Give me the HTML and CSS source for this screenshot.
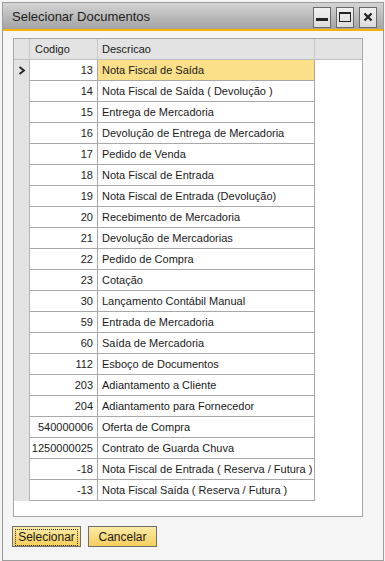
FILE: index.html
```html
<!DOCTYPE html>
<html lang="pt">
<head>
    <meta charset="UTF-8">
    <title>Selecionar Documentos</title>
    <link rel="stylesheet" href="styles.css">
</head>
<body>
    <div class="window">
        <div class="titlebar">
            <span class="title">Selecionar Documentos</span>
            <div class="win-buttons">
                <button class="win-btn"><svg width="12" height="10" viewBox="0 0 12 10"><rect x="0" y="6" width="12" height="3" fill="#222"/></svg></button>
                <button class="win-btn"><svg width="12" height="10" viewBox="0 0 12 10"><rect x="0.5" y="0.5" width="11" height="9" fill="none" stroke="#222"/><rect x="0" y="0" width="12" height="2" fill="#222"/></svg></button>
                <button class="win-btn"><svg width="10" height="10" viewBox="0 0 10 10"><path d="M1.5 1.5 L8.5 8.5 M8.5 1.5 L1.5 8.5" stroke="#222" stroke-width="2.2"/></svg></button>
            </div>
        </div>
        <div class="accent"></div>

        <div class="content">
            <div class="grid">
                <div class="row header">
                    <div class="sel"></div>
                    <div class="cell code">Codigo</div>
                    <div class="cell desc">Descricao</div>
                    <div class="filler"></div>
                </div>
                <div class="row">
                    <div class="sel"><svg width="8" height="9" viewBox="0 0 8 9"><path d="M1.5 1 L6 4.5 L1.5 8" fill="none" stroke="#222" stroke-width="1.8"/></svg></div>
                    <div class="cell num">13</div>
                    <div class="cell desc active">Nota Fiscal de Saída</div>
                    <div class="filler"></div>
                </div>
                <div class="row"><div class="sel"></div><div class="cell num">14</div><div class="cell desc">Nota Fiscal de Saída ( Devolução )</div><div class="filler"></div></div>
                <div class="row"><div class="sel"></div><div class="cell num">15</div><div class="cell desc">Entrega de Mercadoria</div><div class="filler"></div></div>
                <div class="row"><div class="sel"></div><div class="cell num">16</div><div class="cell desc">Devolução de Entrega de Mercadoria</div><div class="filler"></div></div>
                <div class="row"><div class="sel"></div><div class="cell num">17</div><div class="cell desc">Pedido de Venda</div><div class="filler"></div></div>
                <div class="row"><div class="sel"></div><div class="cell num">18</div><div class="cell desc">Nota Fiscal de Entrada</div><div class="filler"></div></div>
                <div class="row"><div class="sel"></div><div class="cell num">19</div><div class="cell desc">Nota Fiscal de Entrada (Devolução)</div><div class="filler"></div></div>
                <div class="row"><div class="sel"></div><div class="cell num">20</div><div class="cell desc">Recebimento de Mercadoria</div><div class="filler"></div></div>
                <div class="row"><div class="sel"></div><div class="cell num">21</div><div class="cell desc">Devolução de Mercadorias</div><div class="filler"></div></div>
                <div class="row"><div class="sel"></div><div class="cell num">22</div><div class="cell desc">Pedido de Compra</div><div class="filler"></div></div>
                <div class="row"><div class="sel"></div><div class="cell num">23</div><div class="cell desc">Cotação</div><div class="filler"></div></div>
                <div class="row"><div class="sel"></div><div class="cell num">30</div><div class="cell desc">Lançamento Contábil Manual</div><div class="filler"></div></div>
                <div class="row"><div class="sel"></div><div class="cell num">59</div><div class="cell desc">Entrada de Mercadoria</div><div class="filler"></div></div>
                <div class="row"><div class="sel"></div><div class="cell num">60</div><div class="cell desc">Saída de Mercadoria</div><div class="filler"></div></div>
                <div class="row"><div class="sel"></div><div class="cell num">112</div><div class="cell desc">Esboço de Documentos</div><div class="filler"></div></div>
                <div class="row"><div class="sel"></div><div class="cell num">203</div><div class="cell desc">Adiantamento a Cliente</div><div class="filler"></div></div>
                <div class="row"><div class="sel"></div><div class="cell num">204</div><div class="cell desc">Adiantamento para Fornecedor</div><div class="filler"></div></div>
                <div class="row"><div class="sel"></div><div class="cell num">540000006</div><div class="cell desc">Oferta de Compra</div><div class="filler"></div></div>
                <div class="row"><div class="sel"></div><div class="cell num">1250000025</div><div class="cell desc">Contrato de Guarda Chuva</div><div class="filler"></div></div>
                <div class="row"><div class="sel"></div><div class="cell num">-18</div><div class="cell desc">Nota Fiscal de Entrada ( Reserva / Futura )</div><div class="filler"></div></div>
                <div class="row"><div class="sel"></div><div class="cell num">-13</div><div class="cell desc">Nota Fiscal Saída ( Reserva / Futura )</div><div class="filler"></div></div>
            </div>

            <div class="actions">
                <button class="btn focused"><span>Selecionar</span></button>
                <button class="btn"><span>Cancelar</span></button>
            </div>
        </div>
    </div>
</body>
</html>
```

FILE: styles.css
```css
body {
    margin: 0;
    padding: 2px 1px 0 2px;
    background: #f4f4f4;
    font-family: 'Liberation Sans', Arial, sans-serif;
    font-size: 11px;
    color: #1a1a1a;
}
.window {
    width: 380px;
    height: 557px;
    border: 1px solid #9c9c9c;
    background: #f5f5f5;
    display: flex;
    flex-direction: column;
}
.titlebar {
    height: 26px;
    background: linear-gradient(#d4d4d4, #a3a3a3);
    display: flex;
    align-items: center;
    justify-content: space-between;
    padding: 0 6px 0 9px;
}
.title {
    font-size: 13px;
    color: #1e1e1e;
}
.win-buttons {
    display: flex;
    gap: 5px;
    margin-top: 2px;
}
.win-btn {
    width: 18px;
    height: 21px;
    padding: 0;
    border: 1px solid #6a6a6a;
    background: linear-gradient(#f0f0f0, #dcdcdc);
    display: flex;
    align-items: center;
    justify-content: center;
}
.accent {
    height: 2px;
    background: #f5b400;
}
.content {
    padding: 7px 0 0 10px;
}
.grid {
    width: 348px;
    height: 477px;
    border: 1px solid #a8a8a8;
    background: #fff;
}
.row {
    display: flex;
    height: 21px;
}
.sel {
    width: 15px;
    background: #e3e3e3;
    border-right: 1px solid #b4b4b4;
    display: flex;
    align-items: center;
    justify-content: center;
}
.cell {
    height: 20px;
    line-height: 20px;
    border-right: 1px solid #a8a8a8;
    border-bottom: 1px solid #a8a8a8;
    white-space: nowrap;
    overflow: hidden;
}
.num {
    width: 63px;
    padding-right: 4px;
    text-align: right;
}
.code {
    width: 62px;
    padding-left: 5px;
}
.desc {
    width: 212px;
    padding-left: 4px;
}
.filler {
    flex: 1;
}
.header .sel,
.header .cell,
.header .filler {
    height: 20px;
    background: #e3e3e3;
    border-right-color: #c9c9c9;
    border-bottom: 1px solid #c0c0c0;
}
.active {
    background: #fcdf89;
}
.actions {
    display: flex;
    gap: 7px;
    margin: 9px 0 0 -1px;
}
.btn {
    width: 69px;
    height: 21px;
    padding: 2px;
    border: 1px solid #6e6e6e;
    background: linear-gradient(#fdeaa6, #f5cf5a);
    font-family: 'Liberation Sans', Arial, sans-serif;
    font-size: 12px;
    color: #1a1a1a;
}
.btn span {
    display: block;
    height: 15px;
    line-height: 15px;
    border: 1px dotted transparent;
}
.btn.focused span {
    border-color: #333;
}
```
